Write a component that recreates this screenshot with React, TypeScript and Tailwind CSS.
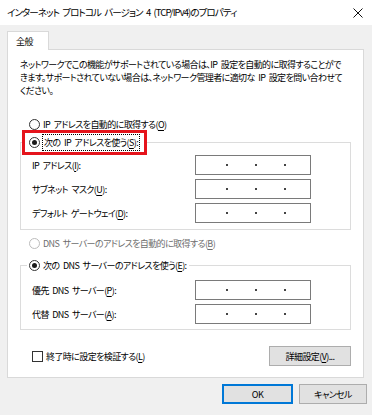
import React from 'react';

const U = ({ children }: { children: React.ReactNode }) => (
  <span className="underline underline-offset-[2px]">{children}</span>
);

const Radio = ({ checked, disabled }: { checked?: boolean; disabled?: boolean }) => (
  <span
    className={`flex h-[11px] w-[11px] shrink-0 items-center justify-center rounded-full border bg-white ${
      disabled ? 'border-[#bcbcbc]' : 'border-[#333333]'
    }`}
  >
    {checked && <span className="h-[5px] w-[5px] rounded-full bg-[#1a1a1a]" />}
  </span>
);

const IpBox = () => (
  <div className="flex h-[20px] w-[116px] items-center gap-[27px] border border-[#7a7a7a] bg-white pl-[30px]">
    <span className="h-[2px] w-[2px] bg-[#444]" />
    <span className="h-[2px] w-[2px] bg-[#444]" />
    <span className="h-[2px] w-[2px] bg-[#444]" />
  </div>
);

const Row = ({ label }: { label: React.ReactNode }) => (
  <div className="grid h-[20px] grid-cols-[163px_116px] items-center">
    <span>{label}</span>
    <IpBox />
  </div>
);

export default function App() {
  return (
    <div className="flex h-[415px] w-[372px] flex-col bg-[#f0f0f0] font-['Noto_Sans_CJK_JP',sans-serif] text-[9px] leading-[13px] tracking-[-0.6px] text-black [font-feature-settings:'palt'] [word-spacing:2px]">
      {/* title bar */}
      <div className="flex h-[25px] items-center justify-between bg-white pl-[7px] pr-[9px] text-[9.5px] tracking-[-0.9px]">
        <span>インターネット プロトコル バージョン 4 (TCP/IPv4)のプロパティ</span>
        <svg width="10" height="10" viewBox="0 0 10 10" stroke="#111" strokeWidth="1">
          <path d="M0.5 0.5L9.5 9.5M9.5 0.5L0.5 9.5" />
        </svg>
      </div>

      <div className="flex flex-col px-[7px] pt-[6px]">
        <div className="relative z-10 -mb-px flex h-[19px] w-[42px] items-center border border-b-0 border-[#d9d9d9] bg-white pl-[8px]">
          全般
        </div>
        <div className="flex w-[357px] flex-col border border-[#d9d9d9] bg-white px-[12px] pt-[8px] pb-[11px]">
          <p className="whitespace-nowrap">
            ネットワークでこの機能がサポートされている場合は、IP 設定を自動的に取得することがで
            <br />
            きます。サポートされていない場合は、ネットワーク管理者に適切な IP 設定を問い合わせて
            <br />
            ください。
          </p>

          <div className="mt-[21px] flex h-[12px] items-center gap-[3px] pl-[9px]">
            <Radio />
            <span>
              IP アドレスを自動的に取得する(<U>O</U>)
            </span>
          </div>

          <fieldset className="border border-[#dcdcdc] pb-[6px]">
            <legend className="ml-[1px] flex h-[25px] items-center gap-[2px] border-[3px] border-[#e5141c] pr-[4px] pl-[4px]">
              <Radio checked />
              <span className="border border-dotted border-black px-[1px] leading-[15px]">
                次の IP アドレスを使う(<U>S</U>):
              </span>
            </legend>
            <div className="flex flex-col gap-[4px] px-[11px]">
              <Row label={<>IP アドレス(<U>I</U>):</>} />
              <Row label={<>サブネット マスク(<U>U</U>):</>} />
              <Row label={<>デフォルト ゲートウェイ(<U>D</U>):</>} />
            </div>
          </fieldset>

          <div className="mt-[7px] flex h-[13px] items-center gap-[3px] pl-[9px] text-[#6d6d6d]">
            <Radio disabled />
            <span>
              DNS サーバーのアドレスを自動的に取得する(<U>B</U>)
            </span>
          </div>

          <fieldset className="mt-[7px] border border-[#dcdcdc] pb-[5px]">
            <legend className="ml-[6px] flex h-[16px] items-center gap-[3px] px-[2px]">
              <Radio checked />
              <span>
                次の DNS サーバーのアドレスを使う(<U>E</U>):
              </span>
            </legend>
            <div className="mt-[7px] flex flex-col gap-[4px] px-[11px]">
              <Row label={<>優先 DNS サーバー(<U>P</U>):</>} />
              <Row label={<>代替 DNS サーバー(<U>A</U>):</>} />
            </div>
          </fieldset>

          <div className="mt-[16px] flex h-[20px] items-center justify-between pl-[12px]">
            <div className="flex items-center gap-[3px]">
              <span className="h-[11px] w-[11px] border border-[#333333] bg-white" />
              <span>
                終了時に設定を検証する(<U>L</U>)
              </span>
            </div>
            <button className="flex h-[20px] w-[82px] items-center justify-center border border-[#adadad] bg-[#e1e1e1]">
              詳細設定(<U>V</U>)...
            </button>
          </div>
        </div>

        <div className="mt-[6px] flex justify-end gap-[6px]">
          <button className="flex h-[20px] w-[71px] items-center justify-center border border-[#0078d7] bg-[#e1e1e1] shadow-[inset_0_0_0_1px_#0078d7]">
            OK
          </button>
          <button className="-mr-[2px] flex h-[20px] w-[68px] items-center justify-center border border-[#adadad] bg-[#e1e1e1]">
            キャンセル
          </button>
        </div>
      </div>
    </div>
  );
}
